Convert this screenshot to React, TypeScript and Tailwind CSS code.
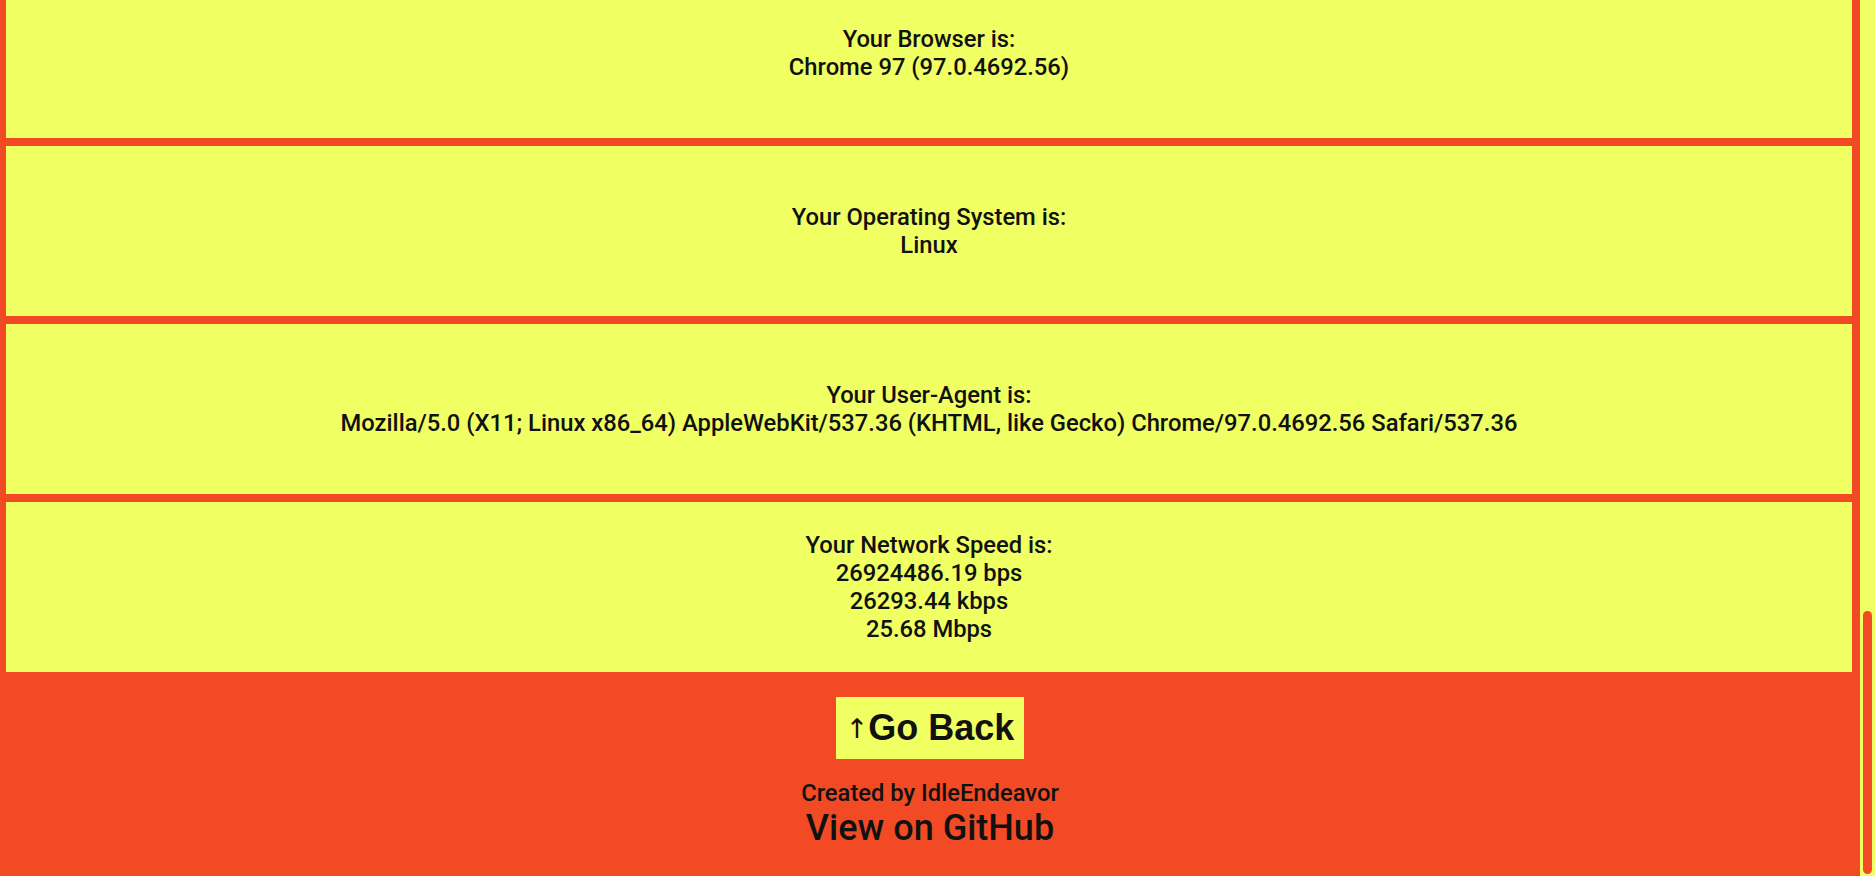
const orange = "bg-[#f14a24]"

const cards = [
  { title: "Your Browser is:", lines: ["Chrome 97 (97.0.4692.56)"] },
  { title: "Your Operating System is:", lines: ["Linux"] },
  {
    title: "Your User-Agent is:",
    lines: [
      "Mozilla/5.0 (X11; Linux x86_64) AppleWebKit/537.36 (KHTML, like Gecko) Chrome/97.0.4692.56 Safari/537.36",
    ],
  },
  {
    title: "Your Network Speed is:",
    lines: ["26924486.19 bps", "26293.44 kbps", "25.68 Mbps"],
  },
]

export default function App() {
  return (
    <div className={`flex h-[876px] w-full overflow-hidden ${orange} text-[#111] leading-[normal]`}>
      <main className="flex flex-1 flex-col overflow-hidden">
        {/* page is scrolled down, first card is cut off at the top */}
        <div className="-mt-[32px] flex flex-col gap-[8px] pl-[6px] pr-[8px] font-['Roboto',sans-serif] text-[23.75px] font-medium">
          {cards.map((card) => (
            <section
              key={card.title}
              className="flex h-[170px] flex-col items-center justify-center bg-[#f0ff62] text-center"
            >
              <p>{card.title}</p>
              {card.lines.map((line) => (
                <p key={line}>{line}</p>
              ))}
            </section>
          ))}
        </div>

        <footer className="flex flex-col items-center pt-[25px] font-['Roboto',sans-serif] font-medium">
          <button className="flex h-[62px] items-center bg-[#f0ff62] pl-[10px] pr-[10px] font-['Liberation_Sans',Arial,sans-serif] text-[#111]">
            <span className="font-['DejaVu_Sans',sans-serif] text-[27px] font-normal">↑</span>
            <span className="text-[36px] font-bold">Go Back</span>
          </button>
          <p className="mt-[20px] text-[23.75px]">Created by IdleEndeavor</p>
          <a className="text-[36px]">View on GitHub</a>
        </footer>
      </main>

      {/* scrollbar */}
      <div className="flex w-[15px] flex-col justify-end bg-[#f0ff62] px-[3px] pb-[2px]">
        <div className={`h-[263px] rounded-full ${orange}`} />
      </div>
    </div>
  )
}
